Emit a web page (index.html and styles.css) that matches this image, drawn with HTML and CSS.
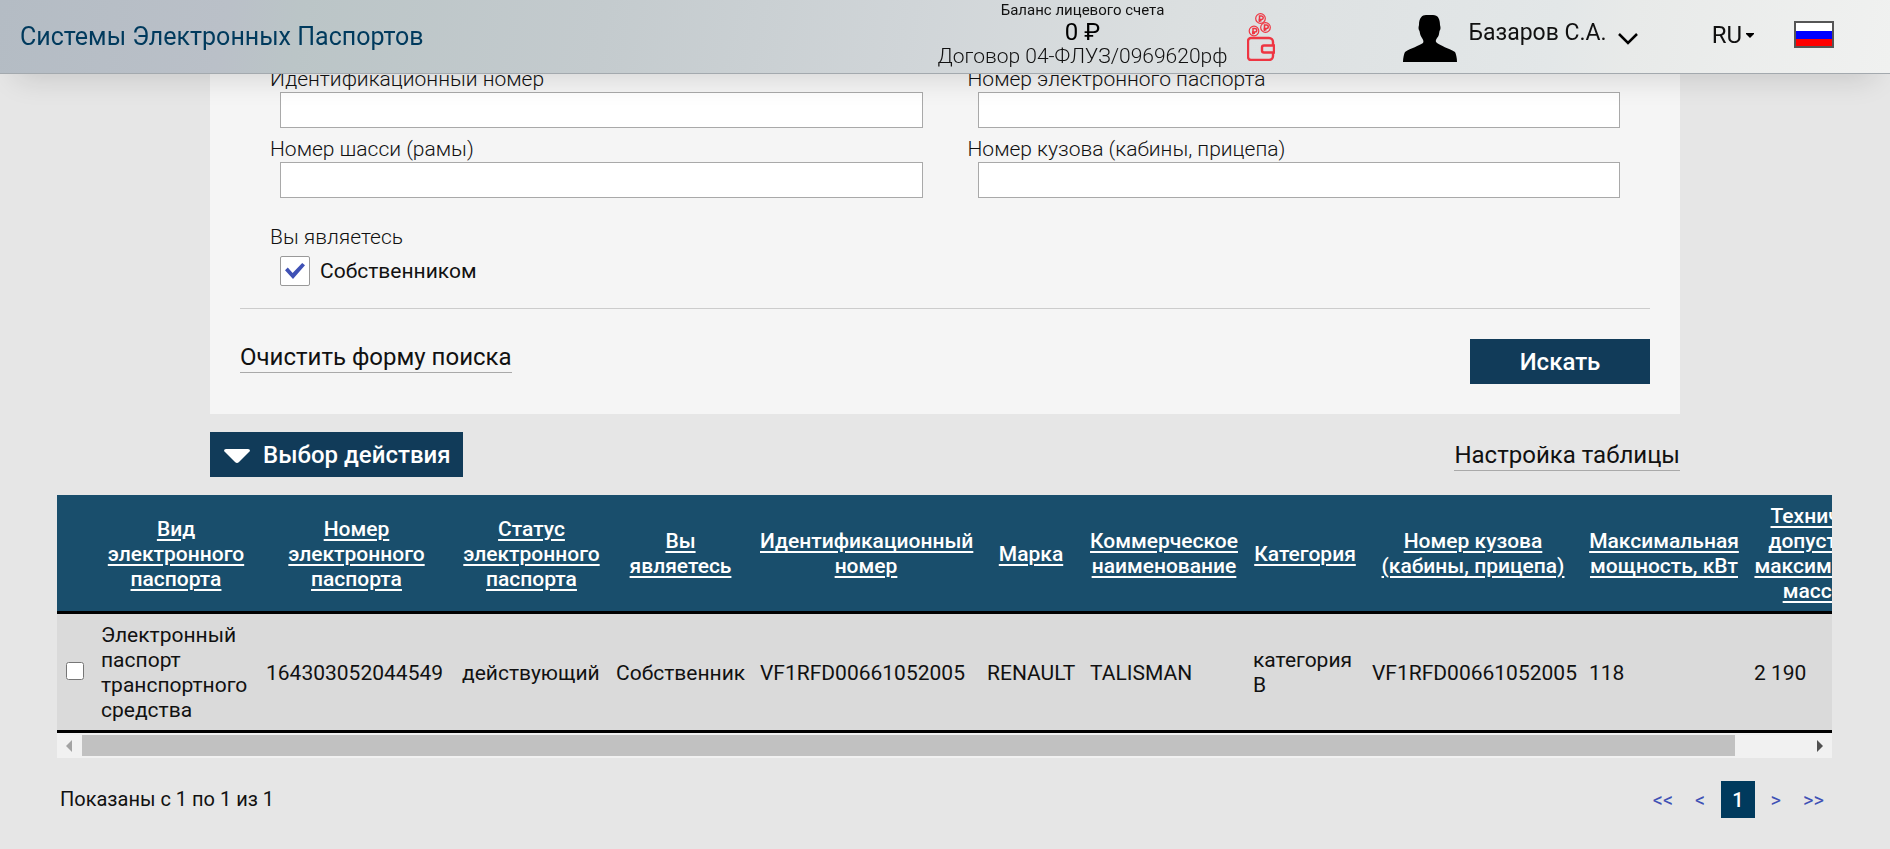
FILE: index.html
```html
<!DOCTYPE html>
<html lang="ru">
<head>
<meta charset="utf-8">
<meta name="viewport" content="width=device-width, initial-scale=1">
<title>Системы Электронных Паспортов</title>
<link rel="stylesheet" href="styles.css">
</head>
<body>
<header class="topbar">
  <a class="brand" href="#">Системы Электронных Паспортов</a>
  <div class="account">
    <div class="balance">
      <div class="balance-title">Баланс лицевого счета</div>
      <div class="balance-sum">0 ₽</div>
      <div class="balance-contract">Договор 04-ФЛУЗ/0969620рф</div>
    </div>
    <svg class="wallet" viewBox="0 0 28 48" width="28" height="48" fill="none" stroke="#ee3542" aria-hidden="true">
      <g stroke-width="1.2">
        <circle cx="13.500" cy="5.500" r="4.800"/><circle cx="18.500" cy="14.500" r="4.800"/><circle cx="7" cy="18" r="4.800"/>
      </g>
      <g stroke-width="1.500">
        <path d="M12.500 9V3h2a1.700 1.700 0 0 1 0 3.500h-3M11.500 7.800h3"/>
        <path d="M17.500 18v-6h2a1.700 1.700 0 0 1 0 3.500h-3M16.500 16.800h3"/>
        <path d="M6 21.500v-6h2a1.700 1.700 0 0 1 0 3.500H5M5 20.300h3"/>
      </g>
      <path stroke-width="2.400" d="M26 32v-3a4 4 0 0 0-4-4H4a3 3 0 0 0-3 3v16a3 3 0 0 0 3 3h18a4 4 0 0 0 4-4v-3M27 32.500H17a2 2 0 0 0-2 2v3a2 2 0 0 0 2 2h10z"/>
    </svg>
  </div>
  <button class="user" type="button">
    <svg viewBox="0 0 54 47" width="54" height="47" aria-hidden="true"><path d="M0 47C0 43 1 39 2 37C8 33 16 31 20 28C21 26 20 25 19 23C17 20 17 18 16.500 16C15 14 15.500 12 16 10C16 3 19 0 23 0H30C35 0 37 4 37 10C37.500 12 38 14 36.500 16C36 19 36 21 34 23C33 25 32 26 34 28C38 31 45 33 52 37C53 39 54 43 54 47Z"/></svg>
    <span>Базаров С.А.</span>
    <svg class="chevron" viewBox="0 0 20 12" width="20" height="12" fill="none" stroke="#000" stroke-width="2.500" aria-hidden="true"><path d="M1 1l9 9L19 1"/></svg>
  </button>
  <button class="lang" type="button">RU<svg viewBox="0 0 8 5" width="8" height="5" aria-hidden="true"><path d="M0 0h8v1L4 5 0 1z"/></svg></button>
  <svg class="flag" viewBox="0 0 40 27" width="40" height="27" role="img" aria-label="Россия"><path fill="#fff" d="M0 0h40v10H0z"/><path fill="#00f" d="M0 10h40v8H0z"/><path fill="#f00" d="M0 18h40v9H0z"/><path fill="none" stroke="#555" stroke-width="2" d="M1 1h38v25H1z"/></svg>
</header>

<main>
  <form class="search">
    <div class="fields">
      <div class="field"><label for="vin">Идентификационный номер</label><input id="vin" type="text"></div>
      <div class="field"><label for="pass">Номер электронного паспорта</label><input id="pass" type="text"></div>
      <div class="field"><label for="chassis">Номер шасси (рамы)</label><input id="chassis" type="text"></div>
      <div class="field"><label for="body">Номер кузова (кабины, прицепа)</label><input id="body" type="text"></div>
    </div>
    <fieldset class="role">
      <legend>Вы являетесь</legend>
      <label class="check"><input type="checkbox" checked>Собственником</label>
    </fieldset>
    <div class="form-actions">
      <a class="dashed" href="#">Очистить форму поиска</a>
      <button class="btn submit" type="submit">Искать</button>
    </div>
  </form>

  <div class="tools">
    <button class="btn action" type="button"><svg viewBox="0 0 26 14" width="26" height="14" aria-hidden="true"><path fill="#fff" d="M2 0h22q2 0 2 2L15 13q-2 2-4 0L0 2q0-2 2-2z"/></svg>Выбор действия</button>
    <a class="dashed" href="#">Настройка таблицы</a>
  </div>

  <section class="results">
    <div class="table-wrap">
      <table>
        <colgroup>
          <col class="c-check"><col class="c-kind"><col class="c-number"><col class="c-status"><col class="c-role"><col class="c-vin"><col class="c-make"><col class="c-name"><col class="c-cat"><col class="c-body"><col class="c-power"><col class="c-mass">
        </colgroup>
        <thead>
          <tr>
            <th></th>
            <th><a href="#">Вид электронного паспорта</a></th>
            <th><a href="#">Номер электронного паспорта</a></th>
            <th><a href="#">Статус электронного паспорта</a></th>
            <th><a href="#">Вы являетесь</a></th>
            <th><a href="#">Идентификационный номер</a></th>
            <th><a href="#">Марка</a></th>
            <th><a href="#">Коммерческое наименование</a></th>
            <th><a href="#">Категория</a></th>
            <th><a href="#">Номер кузова (кабины, прицепа)</a></th>
            <th><a href="#">Максимальная мощность, кВт</a></th>
            <th><a href="#">Технически допустимая максимальная масса, кг</a></th>
          </tr>
        </thead>
        <tbody>
          <tr>
            <td class="pick"><input type="checkbox" aria-label="Выбрать паспорт"></td>
            <td>Электронный паспорт транспортного средства</td>
            <td>164303052044549</td>
            <td>действующий</td>
            <td>Собственник</td>
            <td>VF1RFD00661052005</td>
            <td>RENAULT</td>
            <td>TALISMAN</td>
            <td>категория B</td>
            <td>VF1RFD00661052005</td>
            <td>118</td>
            <td>2 190</td>
          </tr>
        </tbody>
      </table>
    </div>
    <div class="scroll" aria-hidden="true">
      <svg viewBox="0 0 6 12" width="6" height="12"><path fill="#a3a3a3" d="M6 0v12L0 6z"/></svg>
      <div class="track"><div class="thumb"></div></div>
      <svg viewBox="0 0 6 12" width="6" height="12"><path fill="#505050" d="M0 0v12l6-6z"/></svg>
    </div>
    <div class="footer">
      <div>Показаны с 1 по 1 из 1</div>
      <nav class="pager">
        <a href="#">&lt;&lt;</a><a href="#">&lt;</a><a class="current" href="#">1</a><a href="#">&gt;</a><a href="#">&gt;&gt;</a>
      </nav>
    </div>
  </section>
</main>
</body>
</html>
```

FILE: styles.css
```css
* { box-sizing: border-box; }

body {
  margin: 0;
  background: #e6e6e6;
  color: #111;
  font: 400 20px/25px Roboto, "Noto Sans", sans-serif;
  overflow-x: hidden;
}

button, input { font: inherit; color: inherit; }
button { border: 0; padding: 0; background: none; cursor: pointer; }
a { color: inherit; text-decoration: none; }
svg { display: block; flex: none; }

.topbar {
  position: fixed;
  z-index: 2;
  top: 0;
  left: 0;
  right: 0;
  height: 74px;
  display: flex;
  align-items: center;
  padding: 0 56px 0 20px;
  border-bottom: 1px solid #a3a9ae;
  background: linear-gradient(100deg, #b4bcc4 0%, #bac0c8 12%, #bbc5c7 16%, #c4cbce 32%, #d0d5d8 48%, #dbdfe0 62%, #e3e7e8 82%, #e8eae9 86%, #f0f1f0 100%);
  box-shadow: 0 20px 30px -16px rgba(0, 0, 0, .14);
}

.brand { color: #003a5d; font-size: 25px; line-height: 32px; margin-right: auto; }

.account { display: flex; align-items: center; gap: 20px; margin-right: 128px; }
.balance { padding-bottom: 5px; text-align: center; white-space: nowrap; }
.balance-title { font-size: 15px; line-height: 20px; }
.balance-sum { font-size: 24px; line-height: 25px; color: #000; }
.balance-contract { font-size: 21px; line-height: 23px; font-weight: 300; }

.user { display: flex; align-items: center; gap: 11px; padding-top: 4px; font-size: 23px; margin-right: 74px; }
.user span { padding-bottom: 12px; }
.lang { display: flex; align-items: center; gap: 4px; padding-bottom: 2px; font-size: 24px; margin-right: 40px; }
.flag { margin-bottom: 5px; }

.search {
  width: calc(100% - 420px);
  margin: 0 auto;
  padding: 67px 30px 30px;
  background: #f5f5f5;
}

.fields {
  display: grid;
  grid-template-columns: 1fr 1fr;
  gap: 9px 45px;
  padding: 0 30px;
}

.field label, .role legend { display: block; padding: 0; font-size: 21px; line-height: 25px; font-weight: 300; }
.field { padding-left: 10px; }
.field label { margin-left: -10px; }
.field input {
  display: block;
  width: 100%;
  height: 36px;
  padding: 0 10px;
  border: 1px solid #a9a9a9;
  background: #fff;
}

.role { margin: 27px 0 0; padding: 0 30px 22px; border: 0; border-bottom: 1px solid #ccc; }
.check { display: flex; align-items: center; gap: 10px; width: fit-content; margin: 6px 0 0 10px; font-size: 21px; }
.check input {
  appearance: none;
  width: 30px;
  height: 30px;
  margin: 0;
  padding: 6px 4px;
  border: 1px solid #999;
  border-radius: 2px;
  background: #fff;
}
.check input:checked::before {
  content: "";
  display: block;
  width: 20px;
  height: 16px;
  background: #3f51b5;
  clip-path: polygon(0 45%, 14% 28%, 38% 62%, 86% 0, 100% 14%, 40% 100%);
}

.form-actions { display: flex; align-items: flex-start; justify-content: space-between; padding-top: 30px; }
.dashed { padding-top: 2px; font-size: 24px; line-height: 29px; border-bottom: 1px solid #a9a9a9; }
.form-actions .dashed { padding-top: 4px; }

.btn { height: 45px; padding-top: 2px; background: #113b59; color: #fff; font-size: 24px; font-weight: 500; }
.submit { width: 180px; }
.tools {
  display: flex;
  align-items: center;
  justify-content: space-between;
  width: calc(100% - 420px);
  margin: 18px auto;
}
.action { display: flex; align-items: center; gap: 13px; padding: 2px 12px 0 14px; }

.results { margin: 0 58px 0 57px; }
.table-wrap { overflow: hidden; }
table { width: 1852px; table-layout: fixed; border-collapse: collapse; font-size: 21px; }
th, td { padding: 9px 7px 7px 8px; border-bottom: 3px solid #000; }
th { background: #194e6c; color: #fff; font-weight: 500; text-align: center; }
th a { text-decoration: underline; text-decoration-thickness: 2px; text-underline-offset: 3px; }
td { background: #dadada; text-align: left; }
.c-check { width: 36px; }
.c-kind { width: 165px; }
.c-number { width: 196px; }
.c-status { width: 154px; }
.c-role { width: 144px; }
.c-vin { width: 227px; }
.c-make { width: 103px; }
.c-name { width: 163px; }
.c-cat { width: 119px; }
.c-body { width: 217px; }
.c-power { width: 165px; }
.c-mass { width: 163px; }
.pick input { display: block; width: 18px; height: 18px; margin: 0 0 5px 1px; }

.scroll { display: flex; align-items: center; gap: 10px; height: 25px; padding: 0 9px; background: #f1f1f1; }
.track { flex: 1; }
.thumb { width: calc(100% * 1775 / 1852); height: 21px; background: #c1c1c1; }

.footer { display: flex; align-items: center; justify-content: space-between; padding: 23px 0 20px 3px; }
.pager { display: flex; color: #3f51b5; }
.pager a { padding: 7px 11px 5px; }
.pager a:last-child { padding-right: 8px; }
.pager .current { margin: 0 5px; background: #003a5d; color: #fff; font-weight: 500; }
```
